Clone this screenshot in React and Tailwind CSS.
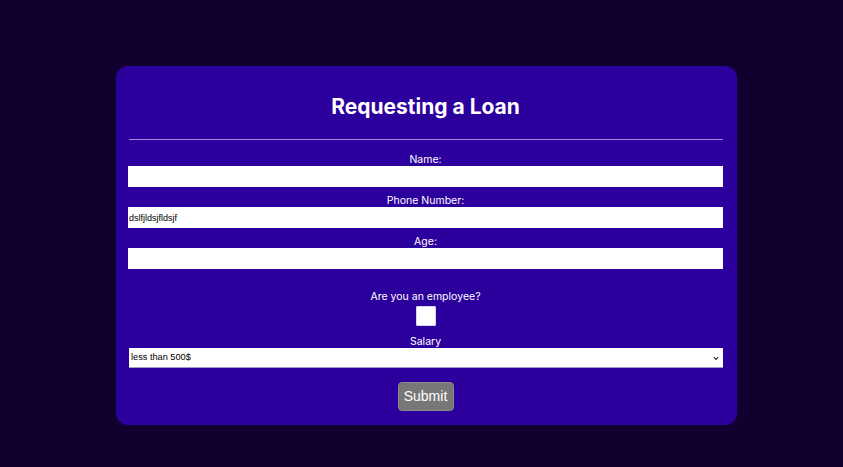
import React, { useState } from 'react'

function Field({ label, value, onChange }) {
  return (
    <div className="flex flex-col items-center w-full">
      <label className="text-[10.5px] leading-[13px] text-white">{label}</label>
      <input
        type="text"
        value={value}
        onChange={(e) => onChange(e.target.value)}
        className="w-full h-[21px] bg-white text-black text-[9px] px-[1px] outline-none border-0 font-['Liberation_Sans',sans-serif]"
      />
    </div>
  )
}

export default function App() {
  const [name, setName] = useState('')
  const [phone, setPhone] = useState('dslfjldsjfldsjf')
  const [age, setAge] = useState('')
  const [employee, setEmployee] = useState(false)

  return (
    <div className="w-full min-h-screen h-[467px] bg-[#0f002f] font-['Inter',sans-serif] pt-[66px] pl-[116px]">
      <form
        className="w-[621px] bg-[#2c009c] rounded-[12px] pl-[12px] pr-[14px] pt-[25px] pb-[14px] flex flex-col items-center"
        onSubmit={(e) => e.preventDefault()}
      >
        <h1 className="text-[21px] leading-[32px] font-bold text-white">Requesting a Loan</h1>
        <hr className="w-[594px] ml-[1px] mt-[16px] border-0 border-t border-[#9d8ad8]" />
        <div className="w-full mt-[13px] flex flex-col gap-[7px]">
          <Field label="Name:" value={name} onChange={setName} />
          <Field label="Phone Number:" value={phone} onChange={setPhone} />
          <Field label="Age:" value={age} onChange={setAge} />
        </div>
        <label className="mt-[21px] text-[10.5px] leading-[13px] text-white">Are you an employee?</label>
        <input
          type="checkbox"
          checked={employee}
          onChange={(e) => setEmployee(e.target.checked)}
          className="mt-[3px] w-[20px] h-[20px] appearance-none bg-white rounded-[1px] border border-[#d8d0f0]"
        />
        <label className="mt-[9px] text-[10.5px] leading-[13px] text-white">Salary</label>
        <div className="relative flex w-[594px] ml-[1px] h-[20px]">
          <select className="block w-full h-[20px] appearance-none bg-white text-black text-[9.2px] pl-[2px] border-0 border-b border-[#a898c8] outline-none font-['Liberation_Sans',sans-serif]">
            <option>less than 500$</option>
            <option>500$ - 1000$</option>
            <option>more than 1000$</option>
          </select>
          {/* small chevron like the native one */}
          <svg className="absolute right-[4px] top-[8px] pointer-events-none" width="6" height="5" viewBox="0 0 6 5">
            <path d="M0.8 1.2 L3 3.4 L5.2 1.2" fill="none" stroke="#222" strokeWidth="1.1" />
          </svg>
        </div>
        <button
          type="submit"
          className="mt-[14px] w-[56px] h-[29px] bg-[#777777] rounded-[4px] border border-[#8a8a8a] text-white text-[14px] font-['Liberation_Sans',sans-serif]"
        >
          Submit
        </button>
      </form>
    </div>
  )
}
